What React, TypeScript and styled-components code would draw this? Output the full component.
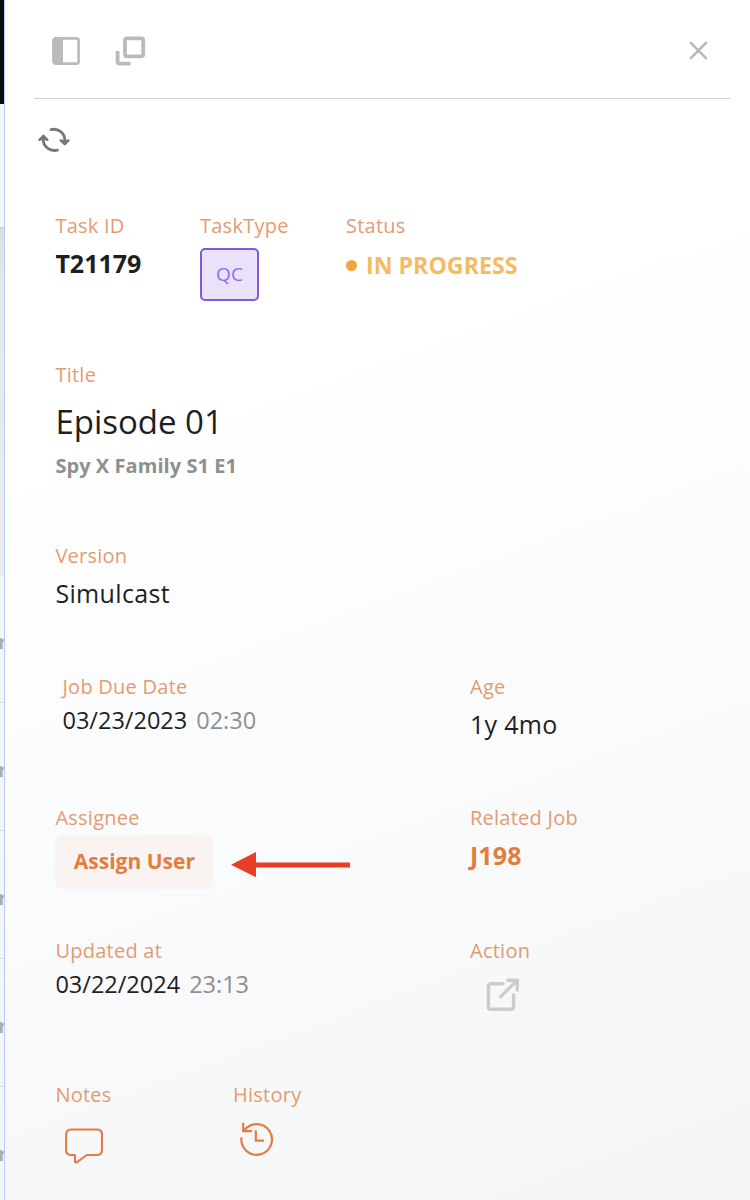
import React from "react";
import styled, { createGlobalStyle } from "styled-components";

const GlobalStyle = createGlobalStyle`
  *, *::before, *::after { box-sizing: border-box; }
  body { margin: 0; overflow: hidden; }
  button { font: inherit; border: 0; padding: 0; background: none; cursor: pointer; }
`;

const Screen = styled.div`
  display: flex;
  width: 750px;
  height: 1200px;
  overflow: hidden;
  font-family: "Open Sans", sans-serif;
  color: #1f1f1f;
`;

const PageEdge = styled.div`
  flex: 0 0 4px;
  display: flex;
  flex-direction: column;
  overflow: hidden;
  background: #f4f5f5;
`;

const EdgeHeader = styled.div`
  flex: 0 0 104px;
  background: #0c0c0c;
`;

const EdgeToolbar = styled.div`
  flex: 0 0 123px;
`;

const EdgeTableHead = styled.div`
  flex: 0 0 348px;
  border-top: 1px solid #cfcfcf;
  background: linear-gradient(#dedede, #e9e9e9 20%, #ebebeb);
`;

const EdgeRow = styled.div`
  flex: 0 0 128px;
  display: flex;
  align-items: center;
  padding-top: 7px;
  border-bottom: 1px solid #d6d7d8;
  font-size: 20px;
  font-weight: 700;
  line-height: 28px;
  color: #adadad;
  text-indent: -2px;
`;

const Panel = styled.main`
  flex: 1;
  min-width: 0;
  display: flex;
  flex-direction: column;
  border-left: 1px solid #b5d0f8;
  background: linear-gradient(160deg, #ffffff 0%, #ffffff 28%, #f8fafc 68%, #f3f4f6 100%);
`;

const Toolbar = styled.header`
  flex: 0 0 99px;
  display: flex;
  align-items: center;
  gap: 34px;
  margin: 0 20px 0 29px;
  padding: 4px 22px 0 17px;
  border-bottom: 1px solid #d2d2d2;
`;

const IconButton = styled.button<{ $color: string; $push?: boolean }>`
  display: flex;
  color: ${(p) => p.$color};
  margin-left: ${(p) => (p.$push ? "auto" : "0")};
`;

const RefreshBar = styled.div`
  flex: 0 0 113px;
  padding: 25px 0 0 32px;
`;

const Row = styled.section<{ $height: number; $columns: string; $inset?: number }>`
  flex: 0 0 ${(p) => p.$height}px;
  display: grid;
  grid-template-columns: ${(p) => p.$columns};
  align-items: start;
  padding-left: ${(p) => p.$inset ?? 50.4}px;
`;

const Field = styled.div`
  display: flex;
  flex-direction: column;
  align-items: flex-start;
  white-space: nowrap;
`;

const Label = styled.span`
  font-size: 20px;
  line-height: 28px;
  letter-spacing: 0.25px;
  color: #e49b70;
`;

const Value = styled.span<{ $size?: number; $bold?: boolean; $gap?: number; $line?: number; $color?: string; $spacing?: number }>`
  margin-top: ${(p) => p.$gap ?? 0}px;
  font-size: ${(p) => p.$size ?? 24}px;
  line-height: ${(p) => p.$line ?? 34}px;
  letter-spacing: ${(p) => p.$spacing ?? 0}px;
  font-weight: ${(p) => (p.$bold ? 700 : 400)};
  color: ${(p) => p.$color ?? "#1f1f1f"};
`;

const Time = styled.span`
  margin-left: 9px;
  color: #8f8f8f;
`;

const TypeTag = styled.span`
  display: flex;
  align-items: center;
  justify-content: center;
  width: 59px;
  height: 53px;
  margin-top: 8px;
  padding-bottom: 2px;
  border: 2px solid #8159e0;
  border-radius: 5px;
  background: #e9e2fa;
  color: #9469f6;
  font-size: 19px;
`;

const Status = styled.span`
  display: flex;
  align-items: center;
  gap: 9px;
  margin-top: 8px;
  font-size: 23.2px;
  line-height: 34px;
  font-weight: 700;
  color: #f4bb61;
  &::before {
    content: "";
    width: 11px;
    height: 11px;
    border-radius: 50%;
    background: #f3a53a;
  }
`;

const AssignLine = styled.div`
  display: flex;
  align-items: center;
  gap: 18px;
  margin-top: 3px;
  svg { margin-top: 5px; }
`;

const AssignButton = styled.button`
  width: 158px;
  height: 54px;
  padding-bottom: 2px;
  border-radius: 7px;
  background: #f9f4f1;
  color: #e27d3d;
  font-size: 21px;
  font-weight: 700;
`;

const IconSlot = styled.div<{ $top: number; $left: number }>`
  display: flex;
  padding: ${(p) => p.$top}px 0 0 ${(p) => p.$left}px;
`;

const SidebarIcon = () => (
  <svg width="30" height="30" viewBox="0 0 30 30" fill="none">
    <rect x="2.4" y="2.4" width="25.2" height="25.2" rx="2.2" stroke="currentColor" strokeWidth="2.6" />
    <path d="M2 2h10v26H2z" fill="currentColor" />
  </svg>
);

const WindowsIcon = () => (
  <svg width="32" height="32" viewBox="0 0 32 32" fill="none" stroke="currentColor" strokeWidth="3.8">
    <rect x="10" y="3.3" width="18.2" height="18" rx="2" />
    <path d="M2.6 16v10.6q0 2 2 2H15.5" />
  </svg>
);

const CloseIcon = () => (
  <svg width="20" height="20" viewBox="0 0 20 20" fill="none" stroke="currentColor" strokeWidth="2.6">
    <path d="M2.1 1.2 18.7 17.8M18.7 1.2 2.1 17.8" />
  </svg>
);

const RefreshIcon = () => (
  <svg width="34" height="30" viewBox="0 0 34 30" fill="none" stroke="currentColor" strokeWidth="2.8" strokeLinecap="round" strokeLinejoin="round">
    <path d="M14 5.6C21.5 4 27.8 9 27.8 16V19.5" />
    <path d="M20.4 26.2C12.8 27.8 6.3 22.8 6.3 15.8V12.2" />
    <path d="M23.7 16.4 27.8 20.2 31.4 16.4 27.8 17.8ZM2.5 15.8 6.3 12 10.4 15.8 6.3 14.2Z" strokeWidth="2.4" />
  </svg>
);

const ArrowIcon = () => (
  <svg width="119" height="26" viewBox="0 0 119 26" fill="#e93d25">
    <path d="M0 12.7 25 0v10.5h94v5H25V25.2z" />
  </svg>
);

const OpenIcon = () => (
  <svg width="34" height="34" viewBox="0 0 34 34" fill="none" stroke="#cbcccd" strokeWidth="3.4" strokeLinecap="round" strokeLinejoin="round">
    <path d="M17 5.8H5q-2.6 0-2.6 2.6V28.7q0 2.6 2.6 2.6H25q2.6 0 2.6-2.6V16.7" />
    <path d="M14.8 18.5 31.2 2.2M21.7 2.2H31.3V12" strokeLinejoin="miter" />
  </svg>
);

const NoteIcon = () => (
  <svg width="38" height="36" viewBox="0 0 38 36" fill="none" stroke="#e27d3d" strokeWidth="2.1" strokeLinejoin="round">
    <path d="M6.1 1.5H32q5 0 5 5V22q0 5-5 5H21.8L12 34.2q-2 1-2-1V27H6.1q-5 0-5-5V6.5q0-5 5-5Z" />
  </svg>
);

const HistoryIcon = () => (
  <svg width="34" height="34" viewBox="0 0 34 34" fill="none" stroke="#e27d3d" strokeWidth="2.2">
    <path d="M1.5 15.3A15.3 15.3 0 1 0 4.1 8.7M3.2 .8V9.2H12" />
    <path d="M15.8 8.2V18.7H24" />
  </svg>
);

export default function App() {
  return (
    <>
      <GlobalStyle />
      <Screen>
        <PageEdge aria-hidden="true">
          <EdgeHeader />
          <EdgeToolbar />
          <EdgeTableHead />
          {[0, 1, 2, 3, 4].map((row) => (
            <EdgeRow key={row}>r</EdgeRow>
          ))}
        </PageEdge>
        <Panel>
          <Toolbar>
            <IconButton $color="#bababa" aria-label="Dock panel"><SidebarIcon /></IconButton>
            <IconButton $color="#bababa" aria-label="Open in window"><WindowsIcon /></IconButton>
            <IconButton $color="#b9b9b9" $push aria-label="Close"><CloseIcon /></IconButton>
          </Toolbar>
          <RefreshBar>
            <IconButton $color="#777777" aria-label="Refresh"><RefreshIcon /></IconButton>
          </RefreshBar>
          <Row $height={149} $columns="144.6px 146px 1fr">
            <Field>
              <Label>Task ID</Label>
              <Value $size={25} $bold $gap={6}>T21179</Value>
            </Field>
            <Field>
              <Label>TaskType</Label>
              <TypeTag>QC</TypeTag>
            </Field>
            <Field>
              <Label>Status</Label>
              <Status>IN PROGRESS</Status>
            </Field>
          </Row>
          <Row $height={181} $columns="1fr">
            <Field>
              <Label>Title</Label>
              <Value $size={33} $line={46} $gap={10}>Episode 01</Value>
              <Value $size={20} $line={28} $gap={7} $spacing={0.06} $bold $color="#8f8f8f">Spy X Family S1 E1</Value>
            </Field>
          </Row>
          <Row $height={131} $columns="1fr">
            <Field>
              <Label>Version</Label>
              <Value $size={25} $gap={6} $spacing={0.35}>Simulcast</Value>
            </Field>
          </Row>
          <Row $height={131} $columns="407.5px 1fr" $inset={57.5}>
            <Field>
              <Label>Job Due Date</Label>
              <Value $size={23.5} $gap={2}>03/23/2023<Time>02:30</Time></Value>
            </Field>
            <Field>
              <Label>Age</Label>
              <Value $size={25} $gap={6} $spacing={0.3}>1y 4mo</Value>
            </Field>
          </Row>
          <Row $height={133} $columns="414.6px 1fr">
            <Field>
              <Label>Assignee</Label>
              <AssignLine>
                <AssignButton>Assign User</AssignButton>
                <ArrowIcon />
              </AssignLine>
            </Field>
            <Field>
              <Label>Related Job</Label>
              <Value $size={25} $bold $gap={6} $spacing={0.1} $color="#e27d3d">J198</Value>
            </Field>
          </Row>
          <Row $height={144} $columns="414.6px 1fr">
            <Field>
              <Label>Updated at</Label>
              <Value $size={23.5} $gap={2}>03/22/2024<Time>23:13</Time></Value>
            </Field>
            <Field>
              <Label>Action</Label>
              <IconSlot $top={13} $left={16}><OpenIcon /></IconSlot>
            </Field>
          </Row>
          <Row $height={119} $columns="177.6px 1fr">
            <Field>
              <Label>Notes</Label>
              <IconSlot $top={18.5} $left={10}><NoteIcon /></IconSlot>
            </Field>
            <Field>
              <Label>History</Label>
              <IconSlot $top={13} $left={7}><HistoryIcon /></IconSlot>
            </Field>
          </Row>
        </Panel>
      </Screen>
    </>
  );
}
